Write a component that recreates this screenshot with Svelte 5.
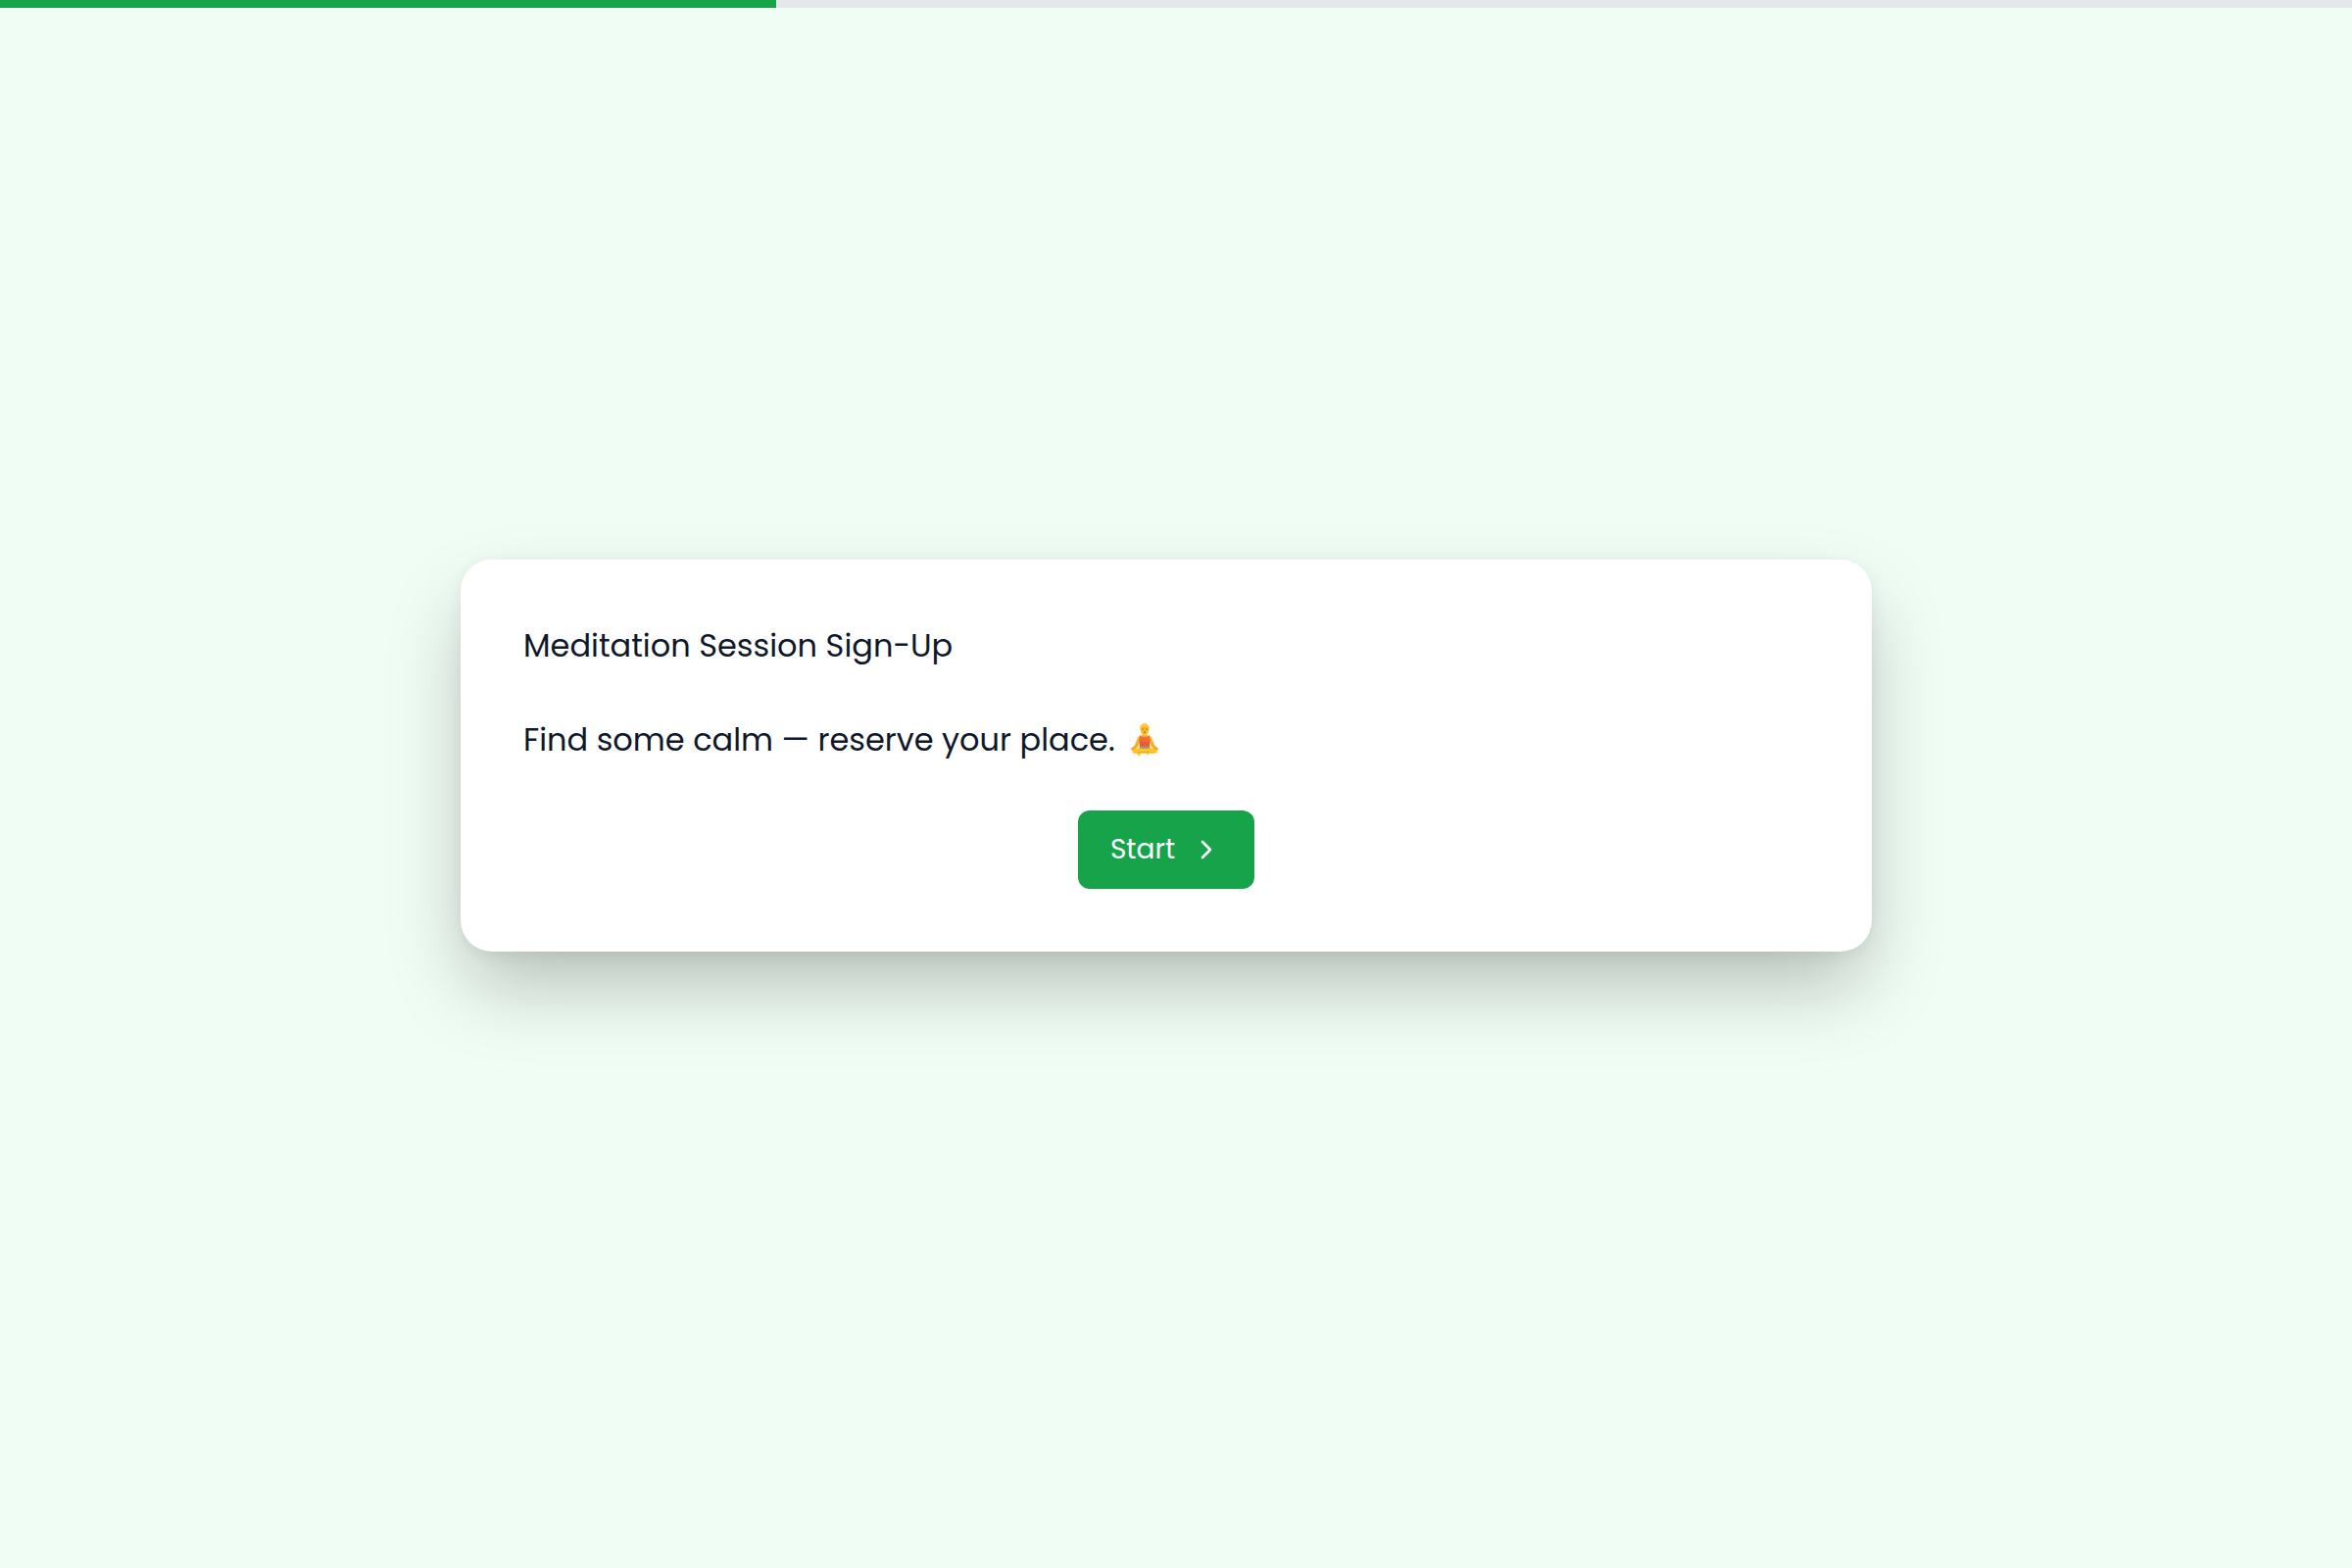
<script lang="ts">
    let progress = $state(33);
</script>

<div class="page">
    <div
        class="progress"
        role="progressbar"
        aria-label="Form progress"
        aria-valuemin="0"
        aria-valuemax="100"
        aria-valuenow={progress}
    >
        <div class="progress-fill" style="width: {progress}%"></div>
    </div>

    <main class="content">
        <section class="card">
            <p class="text">Meditation Session Sign-Up</p>
            <p class="text">
                <span>Find some calm — reserve your place.</span>
                <svg class="emoji" viewBox="0 0 32 36" role="img" aria-label="Person meditating">
                    <defs>
                        <linearGradient id="skin" x1="0" y1="0" x2="0" y2="1">
                            <stop offset="0" stop-color="#ffc93a" />
                            <stop offset="1" stop-color="#f5a31c" />
                        </linearGradient>
                        <linearGradient id="shirt" x1="0" y1="0" x2="0" y2="1">
                            <stop offset="0" stop-color="#f47a35" />
                            <stop offset="1" stop-color="#e35330" />
                        </linearGradient>
                    </defs>
                    <path
                        d="M13.500 9h5v4c3 .3 4.600 1.500 5.300 4.500L26 23c1.200 2 3 2.500 4.300 4.500l-2 1.500c-3-.8-5-3-6.300-6l-1-3H11l-1 3c-1.300 3-3.300 5.200-6.300 6l-2-1.500C3 25.500 4.800 25 6 23l2.200-5.500C9 14.500 10.500 13.300 13.500 13z"
                        fill="url(#skin)"
                    />
                    <path d="M11 13.500q5 2.500 10 0l.8 5-.9 7H11.100l-.9-7z" fill="url(#shirt)" />
                    <path d="M10.500 24.500h11v3h-11z" fill="#b58e83" />
                    <path
                        d="M10 26c2.200 1.500 9.800 1.500 12 0 2 1.300 5 1.500 6.500 3.200 1 1.800-1.500 2.800-4 2.800h-4l-1.500 1.300-2-1.800-5 .2-.7 2.300-2.300-.2-.5-1.800c-3 0-5.800-.8-5-2.800C5 27.500 8 27.300 10 26z"
                        fill="#fdc526"
                    />
                    <path d="M9 30.500q7 1 12-.5" fill="none" stroke="#eba31e" stroke-width="1" />
                    <ellipse cx="16" cy="7" rx="4.500" ry="5.800" fill="#fbb62b" />
                    <path d="M11.300 6.500C10.500-.5 21.500-.5 20.700 6.500q-1.500-2.500-4.700-2.500t-4.700 2.500z" fill="#fdcb3c" />
                    <path
                        d="M13.500 7h1.500m2 0h1.500M15 10h2"
                        fill="none"
                        stroke="#a66514"
                        stroke-width="0.9"
                    />
                </svg>
            </p>
            <button class="start" type="button">
                Start
                <svg class="chevron" viewBox="0 0 24 24" aria-hidden="true">
                    <path d="m9 18 6-6-6-6" />
                </svg>
            </button>
        </section>
    </main>
</div>

<style>
    :global(body) {
        margin: 0;
        background: #f0fdf4;
    }

    .page {
        display: flex;
        flex-direction: column;
        min-height: 100vh;
        background: #f0fdf4;
        color: #0f172a;
        font-family: Poppins, Inter, 'Open Sans', sans-serif;
    }

    .progress {
        height: 8px;
        background: #e5e7eb;
    }

    .progress-fill {
        height: 100%;
        background: #16a34a;
    }

    .content {
        display: flex;
        flex: 1;
        align-items: center;
        justify-content: center;
        padding: 0 20px 66px 0;
    }

    .card {
        display: flex;
        flex-direction: column;
        gap: 48px;
        box-sizing: border-box;
        width: 100%;
        max-width: 1440px;
        padding: 64px;
        border-radius: 32px;
        background: #fff;
        box-shadow:
            0 40px 80px -8px rgb(0 0 0 / 0.25),
            0 4px 16px rgb(0 0 0 / 0.06);
    }

    .text {
        display: flex;
        align-items: center;
        gap: 14px;
        margin: 0;
        font-size: 32px;
        line-height: 48px;
    }

    .emoji {
        width: 32px;
        height: 36px;
        flex-shrink: 0;
    }

    .start {
        display: flex;
        align-items: center;
        align-self: center;
        justify-content: center;
        gap: 16px;
        min-width: 180px;
        height: 80px;
        padding: 0 32px;
        border: none;
        border-radius: 12px;
        background: #16a34a;
        color: #fff;
        font: inherit;
        font-size: 28px;
        cursor: pointer;
    }

    .start:hover {
        background: #15803d;
    }

    .chevron {
        width: 32px;
        height: 32px;
        fill: none;
        stroke: currentColor;
        stroke-width: 2;
        stroke-linecap: round;
        stroke-linejoin: round;
    }
</style>
